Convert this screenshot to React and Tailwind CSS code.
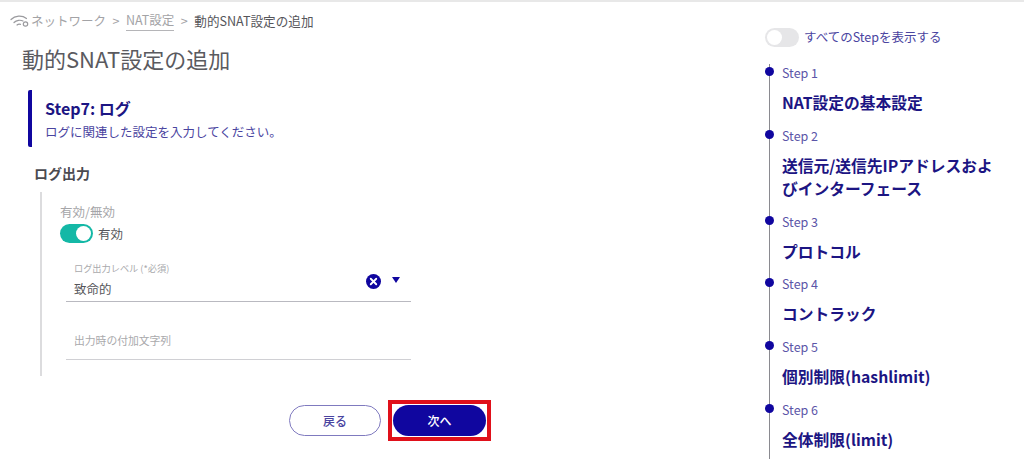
import { X } from "lucide-react";

const steps = [
  { label: "Step 1", title: "NAT設定の基本設定" },
  { label: "Step 2", title: "送信元/送信先IPアドレスおよびインターフェース" },
  { label: "Step 3", title: "プロトコル" },
  { label: "Step 4", title: "コントラック" },
  { label: "Step 5", title: "個別制限(hashlimit)" },
  { label: "Step 6", title: "全体制限(limit)" },
];

function WifiIcon() {
  return (
    <svg width="20" height="14" viewBox="0 0 20 14" fill="none" stroke="#9a9a9e" strokeWidth="1.2" strokeLinecap="round">
      <path d="M1 5.5C5 1.5 12 1 16.5 4.5" />
      <path d="M4 8.5C6.5 6 10.5 5.7 13 7" />
      <path d="M7 11c1-.8 2.5-1 3.5-.6" />
      <circle cx="15.5" cy="10" r="2.2" />
    </svg>
  );
}

function StepItem({ step }) {
  return (
    <li className="relative pb-[12.8px] pl-[12px]">
      <span className="absolute left-[-5px] top-[3px] h-[9px] w-[9px] rounded-full bg-[#10069f]" />
      <p className="text-[12.5px] leading-[18px] text-[#5b55a8]">{step.label}</p>
      <p className="mt-[9px] w-[220px] text-[15.75px] font-bold leading-[23px] text-[#1c1583]">{step.title}</p>
    </li>
  );
}

export default function App() {
  return (
    <div className="flex h-[459px] w-[1024px] overflow-hidden border-t-2 border-[#e8e8e8] bg-white font-['Noto_Sans_CJK_JP','Noto_Sans',sans-serif]">
      <main className="w-[750px] shrink-0 pl-[22px]">
        <nav className="ml-[-12px] mt-[10px] flex h-[18px] items-center gap-[5px] text-[12.5px] text-[#a3a3a6]">
          <WifiIcon />
          <span className="ml-[-4px]">ネットワーク</span>
          <span className="mx-[1.5px]">&gt;</span>
          <span className="border-b border-[#b5b5b8]">NAT設定</span>
          <span className="mx-[1.5px]">&gt;</span>
          <span className="text-[12.6px] text-[#55555a]">動的SNAT設定の追加</span>
        </nav>
        <h1 className="mt-[12px] text-[22px] leading-[32px] text-[#5a5a5f]">動的SNAT設定の追加</h1>

        <section className="ml-[6px] mt-[16px] flex h-[57px] rounded-[2px] border-l-[4px] border-[#10069f] pl-[13px] pt-[7px]">
          <div>
            <h2 className="text-[16px] font-bold leading-[22px] text-[#1c1583]">Step7: ログ</h2>
            <p className="mt-[4px] text-[12.5px] leading-[18px] text-[#4a449f]">ログに関連した設定を入力してください。</p>
          </div>
        </section>

        <h3 className="ml-[12px] mt-[16px] text-[14px] font-bold leading-[20px] text-[#4a4a50]">ログ出力</h3>

        <div className="ml-[18px] mt-[9px] h-[184px] border-l-2 border-[#dcdcde] pl-[18px] pt-[11px]">
          <p className="text-[12.5px] leading-[18px] text-[#a5a5a8]">有効/無効</p>
          <div className="mt-[1px] flex items-center gap-[5px]">
            <span className="flex h-[19px] w-[33px] items-center justify-end rounded-full bg-[#14b8a6] pr-[2px]">
              <span className="h-[15px] w-[15px] rounded-full bg-white" />
            </span>
            <span className="pt-[2px] text-[12.5px] leading-[20px] text-[#55555a]">有効</span>
          </div>

          <div className="ml-[6px] mt-[17px] h-[41px] w-[345px] border-b border-[#b9b9c0] pl-[8px]">
            <p className="text-[9.2px] leading-[14px] text-[#a9a9ac]">ログ出力レベル (*必須)</p>
            <div className="flex items-center justify-between pt-[2px]">
              <span className="text-[12.5px] leading-[24px] text-[#55555a]">致命的</span>
              <span className="mb-[5px] flex -translate-y-[5px] items-center gap-[11px] pr-[11px]">
                <span className="flex h-[15px] w-[15px] items-center justify-center rounded-full bg-[#10069f]">
                  <X size={11} strokeWidth={4} className="text-white" />
                </span>
                <svg width="8" height="6" viewBox="0 0 8 6" className="mb-[3px]">
                  <path d="M0 0h8L4 6z" fill="#10069f" />
                </svg>
              </span>
            </div>
          </div>

          <div className="ml-[6px] mt-[29px] flex h-[29px] w-[345px] items-start border-b border-[#d0d0d4] pl-[8px]">
            <span className="text-[10.8px] leading-[18px] text-[#a9a9ac]">出力時の付加文字列</span>
          </div>
        </div>

        <div className="ml-[267px] mt-[24px] flex items-center gap-[7px]">
          <button className="h-[31px] w-[92px] rounded-full border border-[#7f7abf] bg-white text-[12px] font-medium text-[#4a449f]">
            戻る
          </button>
          <div className="border-[4px] border-[#e0101a] p-[1px]">
            <button className="block h-[31px] w-[93px] rounded-full bg-[#10069f] text-[12px] font-medium text-white">
              次へ
            </button>
          </div>
        </div>
      </main>

      <aside className="flex-1 pl-[15px] pt-[25px]">
        <div className="flex items-center gap-[5px]">
          <span className="flex h-[19px] w-[34px] items-center rounded-full bg-[#e6e6e8] pl-[2px]">
            <span className="h-[15px] w-[15px] rounded-full bg-white" />
          </span>
          <span className="text-[12.5px] leading-[20px] text-[#4a449f]">すべてのStepを表示する</span>
        </div>
        <ol className="ml-[4px] mt-[17px] border-l border-[#8a8a90]">
          {steps.map((step) => (
            <StepItem key={step.label} step={step} />
          ))}
        </ol>
      </aside>
    </div>
  );
}
